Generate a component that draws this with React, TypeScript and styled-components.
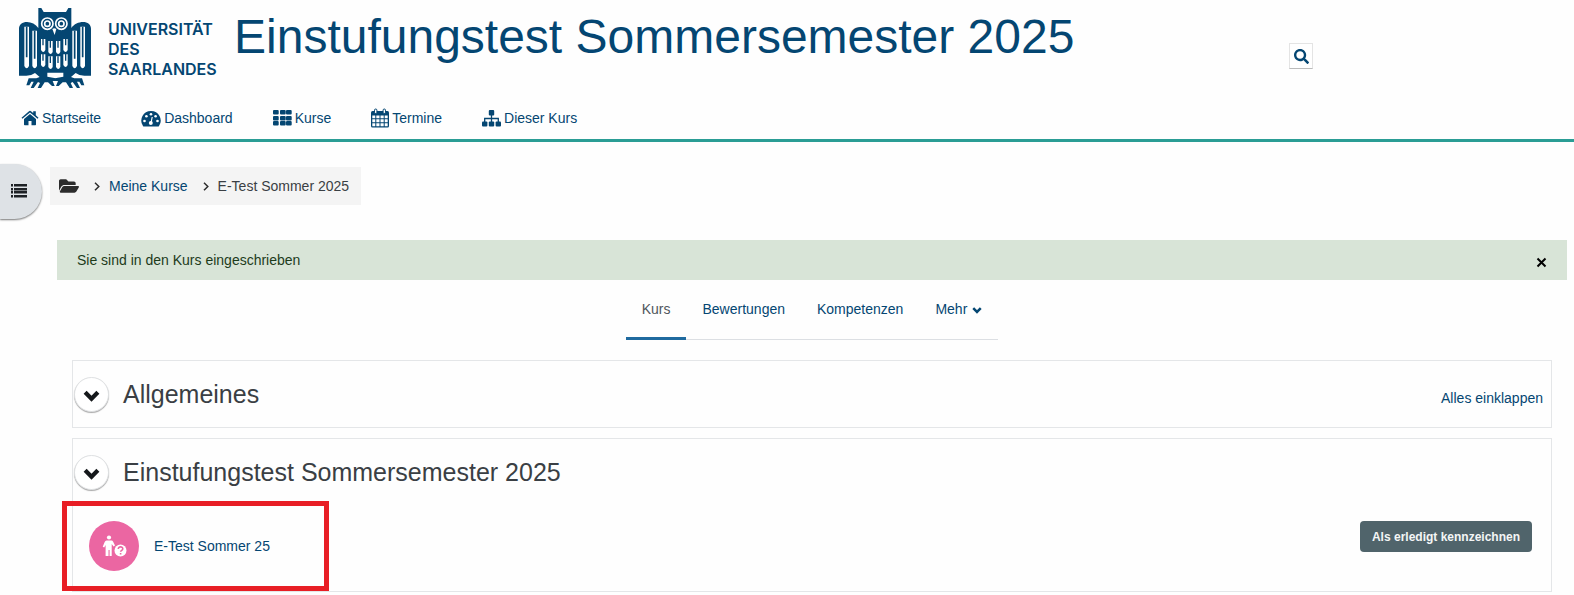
import React from "react";
import styled, { createGlobalStyle } from "styled-components";
import { FaFolderOpen, FaSearch } from "react-icons/fa";

const navy = "#044672";
const line = "#e4e6e8";

const GlobalStyle = createGlobalStyle`
  * { box-sizing: border-box; }
  body {
    margin: 0;
    background: #fefefe;
    color: #3a3f44;
    font: 15px/22px "Liberation Sans", Arial, sans-serif;
  }
  button { font-family: inherit; cursor: pointer; }
  a { color: ${navy}; text-decoration: none; }
  svg { display: block; flex: none; }
`;

const Header = styled.header`
  border-bottom: 3px solid #2a9d95;
`;
const Brand = styled.div`
  display: flex;
  align-items: flex-start;
  padding: 8px 16px 0 18px;
`;
const LogoLink = styled.a`
  display: flex;
  gap: 16px;
  width: 216px;
  flex: none;
`;
const LogoText = styled.span`
  padding-top: 11px;
  font: 600 16px/20px Inter, sans-serif;
`;
const SiteTitle = styled.h1`
  flex: 1;
  margin: 0;
  color: ${navy};
  font-size: 48px;
  font-weight: 400;
  line-height: 58px;
`;
const SearchButton = styled.button`
  display: flex;
  align-items: center;
  justify-content: center;
  width: 24px;
  height: 26px;
  margin: 35px 245px 0 16px;
  padding: 0;
  border: 1px solid #e4e4e4;
  border-bottom-color: #bbb;
  background: #fff;
  color: ${navy};
`;
const MainNav = styled.nav`
  display: flex;
  gap: 40px;
  padding: 17px 21px 10px;
`;
const NavLink = styled.a`
  display: flex;
  align-items: center;
  gap: 3px;
  font-size: 14px;
`;

const Top = styled.div`
  display: flex;
  align-items: flex-start;
  gap: 8px;
  padding-top: 22px;
`;
const DrawerButton = styled.button`
  display: flex;
  align-items: center;
  width: 42px;
  height: 55px;
  padding: 0 0 2px 11px;
  border: 0;
  border-radius: 0 28px 28px 0;
  background: #dee2e6;
  box-shadow: 0 1px 2px #777;
`;
const Breadcrumb = styled.nav`
  display: flex;
  align-items: center;
  height: 38px;
  margin-top: 3px;
  padding: 0 12px 0 9px;
  background: #f4f4f4;
  font-size: 14px;
  svg { color: #2c2c2c; }
`;
const Crumb = styled.span`
  display: flex;
  align-items: center;
  gap: 9px;
  margin-left: 15px;
`;

const Main = styled.main`
  padding: 21px 7px 3px 57px;
`;
const Alert = styled.div`
  display: flex;
  align-items: center;
  justify-content: space-between;
  height: 40px;
  padding: 0 20px;
  background: #d8e4d7;
  color: #1d3b1b;
  font-size: 14px;
`;
const CloseButton = styled.button`
  padding: 4px 0 0;
  border: 0;
  background: none;
  color: #000;
`;
const Tabs = styled.nav`
  display: flex;
  width: fit-content;
  margin: 0 auto 20px;
  border-bottom: 1px solid #dcdfe3;
`;
const Tab = styled.a<{ $active?: boolean }>`
  display: flex;
  gap: 5px;
  height: 60px;
  margin-bottom: -1px;
  padding: 18px 16px 0;
  border-bottom: 3px solid ${(p) => (p.$active ? "#1f6a9f" : "transparent")};
  color: ${(p) => (p.$active ? "#50565c" : navy)};
  font-size: 14px;
  svg { margin-top: 7px; }
`;
const Section = styled.section`
  position: relative;
  margin: 0 15px 10px;
  border: 1px solid ${line};
  &:last-child { margin-bottom: 0; }
`;
const SectionHead = styled.div`
  display: flex;
  align-items: center;
  height: 66px;
  padding: 0 8px 0 1px;
`;
const Toggle = styled.button`
  display: flex;
  align-items: center;
  justify-content: center;
  width: 35px;
  height: 35px;
  padding: 2px 0 0;
  border: 1px solid #dfe1e3;
  border-radius: 50%;
  background: #fff;
  box-shadow: 0 1px 1px #aaa;
`;
const SectionTitle = styled.h2`
  flex: 1;
  margin: 0 0 0 14px;
  font-size: 25px;
  font-weight: 400;
  line-height: 32px;
`;
const CollapseAll = styled.a`
  padding-top: 8px;
  font-size: 14px;
`;
const Activity = styled.div`
  display: flex;
  align-items: flex-start;
  height: 86px;
  padding: 16px 19px 0 16px;
`;
const ActivityLink = styled.a`
  display: flex;
  flex: 1;
  align-items: center;
  gap: 15px;
  font-size: 14px;
`;
const ActivityIcon = styled.span`
  display: flex;
  align-items: center;
  justify-content: center;
  width: 50px;
  height: 50px;
  border-radius: 50%;
  background: #eb66a2;
`;
const DoneButton = styled.button`
  height: 31px;
  padding: 0 12px;
  border: 0;
  border-radius: 4px;
  background: #50646b;
  color: #f4f6f6;
  font-size: 12px;
  font-weight: 700;
`;
const Highlight = styled.div`
  position: absolute;
  left: -11px;
  bottom: 0;
  width: 267px;
  height: 90px;
  border: 5px solid #e81e25;
  pointer-events: none;
`;

const Owl = () => (
  <svg width="74" height="82" viewBox="54 24 222 246" aria-hidden="true">
    <g fill={navy}>
      <path d="M115 24h9l7 12h67l7-12h9v60c8-12 22-18 35-18 14 0 24 8 24 20v141h-20q-16 0-26-8l-14 12 10 4 23 0 7 21h-9l-6-11h-7l9 19h-9l-13-18-6 3 7 15h-10l-11-17h-10l-12 11h-8l6-15h-9v-8l25-5v-12h-48v12l25 5v8h-9l6 15h-8l-12-11h-10l-11 17h-10l7-15-6-3-13 18h-9l9-19h-7l-6 11h-9l7-21h23l10-4-14-12q-10 8-26 8H57V86c0-12 10-20 24-20 13 0 26 6 34 18z" />
    </g>
    <g fill="none" stroke="#fff">
      <circle cx="142" cy="71" r="17" strokeWidth="5" />
      <circle cx="184" cy="71" r="17" strokeWidth="5" />
      <circle cx="142" cy="71" r="8" strokeWidth="5" />
      <circle cx="184" cy="71" r="8" strokeWidth="5" />
    </g>
    <g fill="#fff">
      <path d="M157 87q6-5 12 0l-5 18z" />
      {[73, 97, 217, 241].map((x, i) => {
        const outer = i === 0 || i === 3;
        const top = outer ? 80 : 92;
        return <path key={x} d={`M${x} ${top}h14v${198 - top}q-7 14-14 0z`} />;
      })}
      {[123, 145, 168, 190].map((x, i) => {
        const drop = i === 1 || i === 2 ? 6 : 0;
        return (
          <React.Fragment key={x}>
            <path d={`M${x} ${117 + drop}h13v33q-6 12-13 0z`} />
            <path d={`M${x} ${163 + drop}h13v32q-6 12-13 0z`} />
          </React.Fragment>
        );
      })}
    </g>
    <g stroke={navy} strokeWidth="5">
      <path d="M80 80v92M104 92v84M224 92v84M248 80v92" />
      <path strokeWidth="4" d="M129 116v20M151 123v20M174 123v20M197 116v20M129 162v20M151 169v20M174 169v20M197 162v20" />
    </g>
  </svg>
);

const HomeIcon = () => (
  <svg width="18" height="16" viewBox="0 0 18 16" fill={navy} aria-hidden="true">
    <path d="M9 4l6 5v5.500q0 .7-.7.700H10.500V11h-3v4.200H3.700q-.7 0-.7-.7V9z" />
    <path d="M9 .8q.5 0 1 .4l2.200 1.900V1.300h2.600v4L17.500 7.700l-.9 1.100L9 2.600 1.400 8.800.5 7.700 8 1.200q.5-.4 1-.4z" />
  </svg>
);
const DashboardIcon = () => (
  <svg width="20" height="17" viewBox="0 0 20 17" aria-hidden="true">
    <path fill={navy} d="M10 1a9.600 9.600 0 0 1 8 15q-.3.500-1 .500H3q-.7 0-1-.5A9.600 9.600 0 0 1 10 1z" />
    <g fill="#fff">
      <circle cx="3.500" cy="11" r="1.300" />
      <circle cx="5.400" cy="6.200" r="1.300" />
      <circle cx="10" cy="4.200" r="1.300" />
      <circle cx="14.600" cy="6.200" r="1.300" />
      <circle cx="16.500" cy="11" r="1.300" />
      <circle cx="9.800" cy="13" r="2" />
    </g>
    <path stroke="#fff" strokeWidth="1.200" d="M10 13l1.200-6" />
  </svg>
);
const GridIcon = () => (
  <svg width="19" height="16" viewBox="0 0 19 16" fill={navy} aria-hidden="true">
    {[0, 7, 13].map((x) =>
      [0, 6, 11].map((y) => <rect key={`${x}-${y}`} x={x} y={y} width="5.700" height="4.500" rx="1" />)
    )}
  </svg>
);
const CalendarIcon = () => (
  <svg width="18" height="20" viewBox="0 0 18 20" aria-hidden="true">
    <rect x="0" y="3" width="18" height="16.500" rx="1.500" fill={navy} />
    <path
      fill="#fff"
      d="M1.300 7.500h3v2.700h-3zM5.300 7.500h3.200v2.700H5.300zM9.500 7.500h3.200v2.700H9.500zM13.700 7.500h3v2.700h-3zM1.300 11.200h3v3h-3zM5.300 11.200h3.200v3H5.300zM9.500 11.200h3.200v3H9.500zM13.700 11.200h3v3h-3zM1.300 15.200h3v3h-3zM5.300 15.200h3.200v3H5.300zM9.500 15.200h3.200v3H9.500zM13.700 15.200h3v3h-3z"
    />
    <g fill="#fff" stroke={navy}>
      <rect x="3.500" y="1" width="2.400" height="4.500" rx="1.200" />
      <rect x="12.100" y="1" width="2.400" height="4.500" rx="1.200" />
    </g>
  </svg>
);
const SitemapIcon = () => (
  <svg width="19" height="17" viewBox="0 0 19 17" fill={navy} aria-hidden="true">
    <rect x="6.800" y="0" width="5.400" height="5.500" rx="1" />
    <rect x="0" y="11.500" width="5.400" height="5" rx="1" />
    <rect x="6.800" y="11.500" width="5.400" height="5" rx="1" />
    <rect x="13.600" y="11.500" width="5.400" height="5" rx="1" />
    <path fill="none" stroke={navy} strokeWidth="1.300" d="M9.500 5v7M2.700 12V8.500h13.600V12" />
  </svg>
);
const ListIcon = () => (
  <svg width="16" height="14" viewBox="0 0 16 14" fill="#1d2125" aria-hidden="true">
    {[0, 4, 7, 11].map((y) => (
      <React.Fragment key={y}>
        <rect x="0" y={y} width="2" height="2.500" />
        <rect x="3" y={y} width="13" height="2.500" />
      </React.Fragment>
    ))}
  </svg>
);
const Chevron = ({ size, stroke, color }: { size: number; stroke: number; color: string }) => (
  <svg width={size} height={size} viewBox="0 0 16 16" fill="none" stroke={color} strokeWidth={stroke} aria-hidden="true">
    <path d="M2 5l6 6 6-6" />
  </svg>
);
const Separator = () => (
  <svg width="6" height="9" viewBox="0 0 6 9" fill="none" stroke="currentColor" strokeWidth="1.500" aria-hidden="true">
    <path d="M1 .7l3.800 3.800L1 8.300" />
  </svg>
);
const QuizIcon = () => (
  <svg width="26" height="24" viewBox="0 0 26 24" aria-hidden="true">
    <g fill="#fff">
      <circle cx="8" cy="3.500" r="2.100" />
      <path d="M5.500 6.500h5q1 0 1.500 1l2 4-1.400 1-1.900-2.500V22H8.600v-6H7.500v6H4.600V11L3.200 13.500l-1.500-.8L3.700 8q.6-1.500 1.800-1.500z" />
      <circle cx="19.500" cy="16.500" r="6" />
    </g>
    <path fill="none" stroke="#eb66a2" strokeWidth="1.600" d="M17.300 15c0-3 4.600-2.700 4.500-.2 0 1.500-2.100 1.500-2.200 3M19.600 19v1.600" />
  </svg>
);

const navItems = [
  { label: "Startseite", icon: <HomeIcon /> },
  { label: "Dashboard", icon: <DashboardIcon /> },
  { label: "Kurse", icon: <GridIcon /> },
  { label: "Termine", icon: <CalendarIcon /> },
  { label: "Dieser Kurs", icon: <SitemapIcon /> },
];

const SectionToggle = ({ label }: { label: string }) => (
  <Toggle type="button" aria-expanded="true" aria-label={label}>
    <Chevron size={17} stroke={4} color="#15181b" />
  </Toggle>
);

export default function App() {
  return (
    <>
      <GlobalStyle />
      <Header>
        <Brand>
          <LogoLink href="#">
            <Owl />
            <LogoText>
              UNIVERSITÄT
              <br />
              DES
              <br />
              SAARLANDES
            </LogoText>
          </LogoLink>
          <SiteTitle>Einstufungstest Sommersemester 2025</SiteTitle>
          <SearchButton type="button" aria-label="Suche">
            <FaSearch size={15} />
          </SearchButton>
        </Brand>
        <MainNav>
          {navItems.map((item) => (
            <NavLink href="#" key={item.label}>
              {item.icon}
              {item.label}
            </NavLink>
          ))}
        </MainNav>
      </Header>
      <Top>
        <DrawerButton type="button" aria-label="Kursindex öffnen">
          <ListIcon />
        </DrawerButton>
        <Breadcrumb>
          <FaFolderOpen size={20} />
          <Crumb>
            <Separator />
            <a href="#">Meine Kurse</a>
          </Crumb>
          <Crumb>
            <Separator />
            E-Test Sommer 2025
          </Crumb>
        </Breadcrumb>
      </Top>
      <Main>
        <Alert role="status">
          Sie sind in den Kurs eingeschrieben
          <CloseButton type="button" aria-label="Schließen">
            <svg width="11" height="11" viewBox="0 0 11 11" stroke="#000" strokeWidth="2">
              <path d="M1.500 1.500l8 8M9.500 1.500l-8 8" />
            </svg>
          </CloseButton>
        </Alert>
        <Tabs>
          <Tab href="#" $active>Kurs</Tab>
          <Tab href="#">Bewertungen</Tab>
          <Tab href="#">Kompetenzen</Tab>
          <Tab href="#">
            Mehr
            <Chevron size={10} stroke={4} color={navy} />
          </Tab>
        </Tabs>
        <Section>
          <SectionHead>
            <SectionToggle label="Allgemeines einklappen" />
            <SectionTitle>Allgemeines</SectionTitle>
            <CollapseAll href="#">Alles einklappen</CollapseAll>
          </SectionHead>
        </Section>
        <Section>
          <SectionHead>
            <SectionToggle label="Einstufungstest einklappen" />
            <SectionTitle>Einstufungstest Sommersemester 2025</SectionTitle>
          </SectionHead>
          <Activity>
            <ActivityLink href="#">
              <ActivityIcon>
                <QuizIcon />
              </ActivityIcon>
              E-Test Sommer 25
            </ActivityLink>
            <DoneButton type="button">Als erledigt kennzeichnen</DoneButton>
          </Activity>
          <Highlight />
        </Section>
      </Main>
    </>
  );
}
